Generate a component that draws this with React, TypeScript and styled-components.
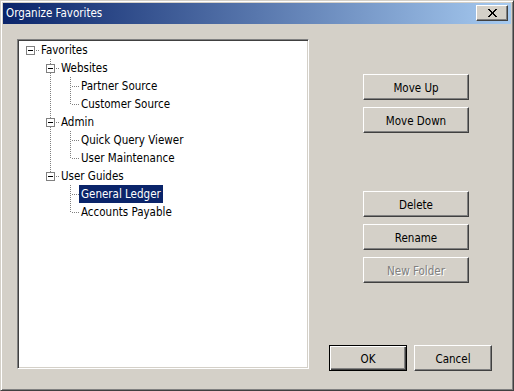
import React from "react";
import styled, { createGlobalStyle } from "styled-components";

const GlobalStyle = createGlobalStyle`
    html, body {
        margin: 0;
        padding: 0;
        background: #d4d0c8;
    }
    body {
        font-family: "DejaVu Sans Condensed", "DejaVu Sans", sans-serif;
        font-size: 11.5px;
    }
`;

const Window = styled.div`
    width: 514px;
    height: 391px;
    box-sizing: border-box;
    padding: 2px;
    background: #d4d0c8;
    border: 1px solid;
    border-color: #d4d0c8 #404040 #404040 #d4d0c8;
    box-shadow: inset 1px 1px #fff, inset -1px -1px #808080;
    display: flex;
    flex-direction: column;
`;

const TitleBar = styled.div`
    height: 21px;
    flex: none;
    display: flex;
    align-items: flex-start;
    background: linear-gradient(to right, #0a246a, #a6caf0);
    color: #fff;
    padding-left: 3px;
    padding-right: 3px;
`;

const Title = styled.div`
    flex: 1;
    line-height: 21px;
    font-size: 11.5px;
`;

const CloseButton = styled.div`
    margin-top: 2px;
    width: 32px;
    height: 16px;
    box-sizing: border-box;
    background: #d4d0c8;
    border: 1px solid;
    border-color: #fff #404040 #404040 #fff;
    box-shadow: inset -1px -1px #808080, inset 1px 1px #d4d0c8;
    display: flex;
    align-items: center;
    justify-content: center;
`;

const Body = styled.div`
    flex: 1;
    display: flex;
    padding: 15px 19px 17px 14px;
`;

const TreePane = styled.div`
    width: 292px;
    height: 330px;
    flex: none;
    box-sizing: border-box;
    background: #fff;
    border: 1px solid;
    border-color: #808080 #fff #fff #808080;
    box-shadow: inset 1px 1px #404040, inset -1px -1px #d4d0c8;
    padding: 1px 0 0 2px;
`;

const Row = styled.div`
    display: flex;
    align-items: center;
    height: 18px;
`;

const Label = styled.span<{ $selected?: boolean }>`
    margin-left: -1px;
    padding: 1px 2px 0;
    box-sizing: border-box;
    height: 18px;
    line-height: 17px;
    white-space: nowrap;
    color: ${p => (p.$selected ? "#fff" : "#000")};
    background: ${p => (p.$selected ? "#0a246a" : "transparent")};
`;

const Side = styled.div`
    flex: 1;
    display: flex;
    flex-direction: column;
`;

const ButtonGroup = styled.div<{ $top: number }>`
    margin-top: ${p => p.$top}px;
    margin-left: 54px;
    display: flex;
    flex-direction: column;
    gap: 7px;
`;

const Button = styled.button<{ $width?: number; $default?: boolean }>`
    width: ${p => p.$width ?? 106}px;
    height: 26px;
    box-sizing: border-box;
    margin: 0;
    padding: 1px 0 0;
    font: inherit;
    color: #000;
    background: #d4d0c8;
    border: 1px solid;
    border-color: ${p => (p.$default ? "#000" : "#fff #404040 #404040 #fff")};
    box-shadow: ${p =>
        p.$default
            ? "inset 1px 1px #fff, inset -1px -1px #404040, inset -2px -2px #808080"
            : "inset -1px -1px #808080, inset 1px 1px #d4d0c8"};
    &:disabled {
        color: #808080;
        text-shadow: 1px 1px 0 #fff;
    }
`;

const Footer = styled.div`
    margin-top: auto;
    display: flex;
    justify-content: flex-end;
    gap: 7px;
`;

interface TreeNode {
    label: string;
    selected?: boolean;
    children?: TreeNode[];
}

type CellKind = "blank" | "pass" | "tee" | "elbow" | "root";

interface FlatRow {
    label: string;
    selected?: boolean;
    cells: CellKind[];
    hasBox: boolean;
}

const tree: TreeNode[] = [
    {
        label: "Favorites",
        children: [
            { label: "Websites", children: [{ label: "Partner Source" }, { label: "Customer Source" }] },
            { label: "Admin", children: [{ label: "Quick Query Viewer" }, { label: "User Maintenance" }] },
            {
                label: "User Guides",
                children: [{ label: "General Ledger", selected: true }, { label: "Accounts Payable" }],
            },
        ],
    },
];

function flatten(nodes: TreeNode[], depth: number, guides: boolean[]): FlatRow[] {
    const out: FlatRow[] = [];
    nodes.forEach((node, i) => {
        const isLast = i === nodes.length - 1;
        const own: CellKind = depth === 0 ? "root" : isLast ? "elbow" : "tee";
        const hasBox = !!node.children?.length;
        out.push({
            label: node.label,
            selected: node.selected,
            cells: [...guides.map(g => (g ? "pass" : "blank") as CellKind), own],
            hasBox,
        });
        if (hasBox) {
            out.push(...flatten(node.children!, depth + 1, [...guides, depth === 0 ? false : !isLast]));
        }
    });
    return out;
}

const DOT = "#808080";

function Guide({ kind, box }: { kind: CellKind; box: boolean }) {
    return (
        <svg width="20" height="18" shapeRendering="crispEdges" style={{ flex: "none" }}>
            {(kind === "pass" || kind === "tee") && (
                <line x1="10.5" y1="0" x2="10.5" y2="18" stroke={DOT} strokeDasharray="1 1" />
            )}
            {kind === "elbow" && <line x1="10.5" y1="0" x2="10.5" y2="10" stroke={DOT} strokeDasharray="1 1" />}
            {kind !== "blank" && kind !== "pass" && (
                <line x1={box ? 16 : 12} y1="9.5" x2="20" y2="9.5" stroke={DOT} strokeDasharray="1 1" />
            )}
            {box && (
                <>
                    <rect x="6.5" y="5.5" width="8" height="8" fill="#fff" stroke="#808080" />
                    <line x1="8" y1="9.5" x2="13" y2="9.5" stroke="#000" />
                </>
            )}
        </svg>
    );
}

function CloseGlyph() {
    const rows = ["XX.....XX", ".XX...XX.", "..XX.XX..", "...XXX...", "...XXX...", "..XX.XX..", ".XX...XX.", "XX.....XX"];
    return (
        <svg width="9" height="8" shapeRendering="crispEdges">
            {rows.flatMap((r, y) =>
                r.split("").map((c, x) => (c === "X" ? <rect key={`${x}-${y}`} x={x} y={y} width="1" height="1" fill="#000" /> : null))
            )}
        </svg>
    );
}

function App() {
    const rows = flatten(tree, 0, []);

    return (
        <>
            <GlobalStyle />
            <Window>
                <TitleBar>
                    <Title>Organize Favorites</Title>
                    <CloseButton>
                        <CloseGlyph />
                    </CloseButton>
                </TitleBar>
                <Body>
                    <TreePane>
                        {rows.map((row, i) => (
                            <Row key={i}>
                                {row.cells.map((c, j) => (
                                    <Guide key={j} kind={c} box={row.hasBox && j === row.cells.length - 1} />
                                ))}
                                <Label $selected={row.selected}>{row.label}</Label>
                            </Row>
                        ))}
                    </TreePane>
                    <Side>
                        <ButtonGroup $top={35}>
                            <Button>Move Up</Button>
                            <Button>Move Down</Button>
                        </ButtonGroup>
                        <ButtonGroup $top={58}>
                            <Button>Delete</Button>
                            <Button>Rename</Button>
                            <Button disabled>New Folder</Button>
                        </ButtonGroup>
                        <Footer>
                            <Button $width={78} $default>OK</Button>
                            <Button $width={78}>Cancel</Button>
                        </Footer>
                    </Side>
                </Body>
            </Window>
        </>
    );
}

export default App;
